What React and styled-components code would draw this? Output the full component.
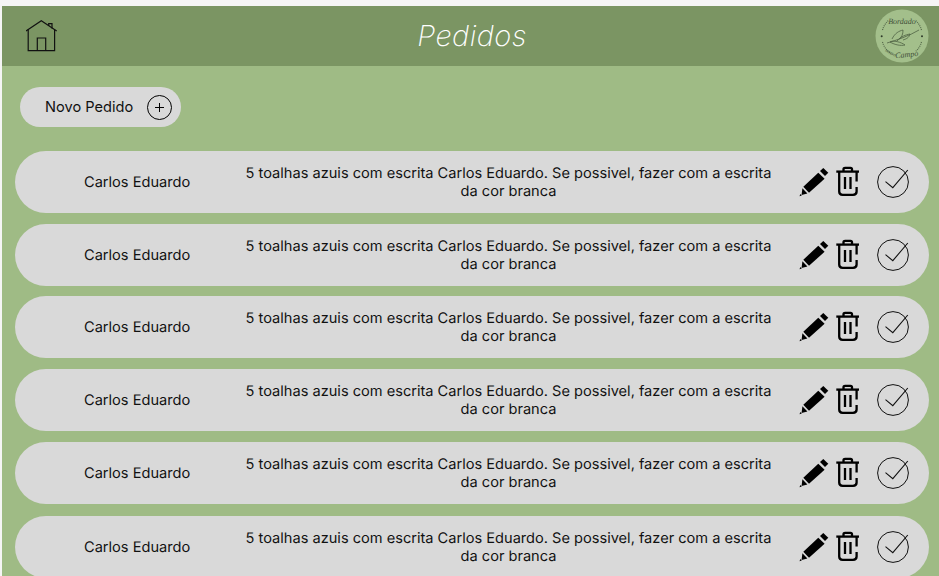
import React from "react";
import styled, { createGlobalStyle } from "styled-components";

const Global = createGlobalStyle`
  html, body { margin: 0; padding: 0; background: #f5f5f5; height: 576px; overflow: hidden; text-rendering: geometricPrecision; }
  * { box-sizing: border-box; }
`;
const Page = styled.div`
  width: 939px; height: 576px; padding: 6px 0 0 2px; overflow: hidden;
  font-family: Inter, "Liberation Sans", sans-serif; color: #111;
`;
const Panel = styled.main`
  width: 937px; height: 570px; background: #9fbb85; overflow: hidden;
`;
const Header = styled.header`
  height: 60px; background: #7b9563; display: flex; align-items: center; justify-content: space-between;
  padding: 0 10px 0 24px; position: relative;
`;
const Title = styled.h1`
  position: absolute; left: 0; right: 0; top: 0; height: 60px; margin: 0; line-height: 60px; text-align: center;
  font-size: 29px; font-weight: 200; font-style: italic; color: #fff; letter-spacing: 0.45px; padding-left: 3px;
  pointer-events: none;
`;
const Toolbar = styled.div`
  padding: 21px 0 0 18px; height: 85px;
`;
const NewButton = styled.button`
  width: 161px; height: 40px; border: 0; border-radius: 20px; background: #d9d9d9; display: flex; align-items: center;
  padding: 0 9px 0 25px; justify-content: space-between; font: 400 14.6px Inter, sans-serif; color: #111;
`;
const List = styled.div`
  display: flex; flex-direction: column; padding: 0 10px 0 13px;
`;
const Row = styled.div`
  height: 62px; flex: none; margin-top: ${p => p.$top}px; border-radius: 31px; background: #d9d9d9; display: flex; align-items: center;
  font-size: 14.6px; line-height: 18px;
`;
const Name = styled.div`
  width: 174px; padding-left: 69px; white-space: nowrap; flex: none;
`;
const Desc = styled.div`
  width: 532px; margin-left: 53.5px; text-align: center; flex: none;
`;
const Actions = styled.div`
  display: flex; align-items: center; margin-left: 24.5px;
`;
const IconGap = styled.span`
  display: flex; margin-left: ${p => p.$gap}px;
`;

const HomeIcon = () => (
  <svg width="32" height="32" viewBox="0 0 32 32" fill="none" stroke="#111" strokeWidth="1.2">
    <path d="M0 10.9 L15.3 .8 L30.7 10.9" />
    <path d="M22.7 6 V3.6 H26 V8.4" />
    <path d="M2.2 9.6 V30.6 H28.6 V9.6" />
    <path d="M11.3 30.6 V18 H19.7 V30.6" />
  </svg>
);
const Logo = () => (
  <svg width="54" height="54" viewBox="0 0 54 54" fill="none">
    <circle cx="27" cy="27" r="26.5" fill="#a3bf8b" />
    <path d="M7.5 33 A20.5 20.5 0 0 0 16 44.5 M46.5 33 A20.5 20.5 0 0 1 40 43 M7.5 21 A20.5 20.5 0 0 1 14 11 M46.5 21 A20.5 20.5 0 0 0 40 11" stroke="#55684a" strokeWidth="1.2" strokeDasharray="1 1" />
    <circle cx="6.7" cy="27.3" r="1" fill="#2f3b2a" />
    <circle cx="47" cy="27.3" r="1" fill="#2f3b2a" />
    <path d="M12 34 C22 31 34 27 44 21" stroke="#4f6244" strokeWidth="0.8" />
    <path d="M17 30 C20 24 24 22 28 21 C28 25 27 28 24 30 M22 32 C27 27 30 26 35 25 C34 29 31 30 28 31 M15 33 C18 31 26 33 30 36 C26 37 20 36 15 33" stroke="#4f6244" strokeWidth="0.8" />
    <text x="27" y="15" textAnchor="middle" fontFamily="'Liberation Serif', serif" fontStyle="italic" fontSize="8" fill="#3f4f38">Bordado</text>
    <text x="15" y="45" textAnchor="middle" fontFamily="'Liberation Serif', serif" fontStyle="italic" fontSize="5" fill="#3f4f38" transform="rotate(28 15 45)">nosso</text>
    <text x="32" y="48" textAnchor="middle" fontFamily="'Liberation Serif', serif" fontStyle="italic" fontSize="8" fill="#3f4f38" transform="rotate(-6 32 48)">Campo</text>
  </svg>
);
const PlusIcon = () => (
  <svg width="25" height="25" viewBox="0 0 25 25" fill="none" stroke="#000" strokeWidth="1">
    <circle cx="12.5" cy="12.5" r="12" />
    <path d="M12.5 8 V17 M8 12.5 H17" />
  </svg>
);
const PencilIcon = () => (
  <svg width="30" height="30" viewBox="0 0 30 30" fill="#000">
    <path d="M21 4 L24.3 1 L29.3 5.7 L26 9 Z" />
    <path d="M19.3 5.7 L25.6 11.8 L10 25.7 L4.3 19.7 Z" />
    <path d="M3.4 21.2 L8.4 26.4 L2.6 28 Z" />
    <path d="M1.4 27 L2.8 28.4 L.5 29.2 Z" />
  </svg>
);
const TrashIcon = () => (
  <svg width="24" height="32" viewBox="0 0 24 32" fill="none" stroke="#000" strokeWidth="2.3">
    <path d="M.3 5.6 H23" />
    <path d="M7.5 5 V3.2 C7.5 2.2 8.2 1.8 9 1.8 H14.5 C15.3 1.8 16 2.2 16 3.2 V5" />
    <path d="M3.2 6 V25.5 C3.2 27.6 4.4 28.8 6.6 28.8 H17 C19.2 28.8 20.6 27.6 20.6 25.5 V21 M20.6 15.5 V6" />
    <path d="M9 11 V23 M14.5 11 V23" />
  </svg>
);
const CheckIcon = () => (
  <svg width="32" height="32" viewBox="0 0 32 32" fill="none" stroke="#111" strokeWidth="1">
    <circle cx="16" cy="16" r="15.4" />
    <path d="M8.5 15.7 L15.8 21.7 L30.8 4" strokeWidth="1.1" />
  </svg>
);

const rowTops = [0, 11, 10, 11, 11, 12];

export default function App() {
  return (
    <Page>
      <Global />
      <Panel>
        <Header>
          <HomeIcon />
          <Title>Pedidos</Title>
          <Logo />
        </Header>
        <Toolbar>
          <NewButton>Novo Pedido <PlusIcon /></NewButton>
        </Toolbar>
        <List>
          {rowTops.map((top, i) => (
            <Row key={i} $top={top}>
              <Name>Carlos Eduardo</Name>
              <Desc>5 toalhas azuis com escrita Carlos Eduardo. Se possivel, fazer com a escrita da cor branca</Desc>
              <Actions>
                <PencilIcon />
                <IconGap $gap={7}><TrashIcon /></IconGap>
                <IconGap $gap={16.5}><CheckIcon /></IconGap>
              </Actions>
            </Row>
          ))}
        </List>
      </Panel>
    </Page>
  );
}
